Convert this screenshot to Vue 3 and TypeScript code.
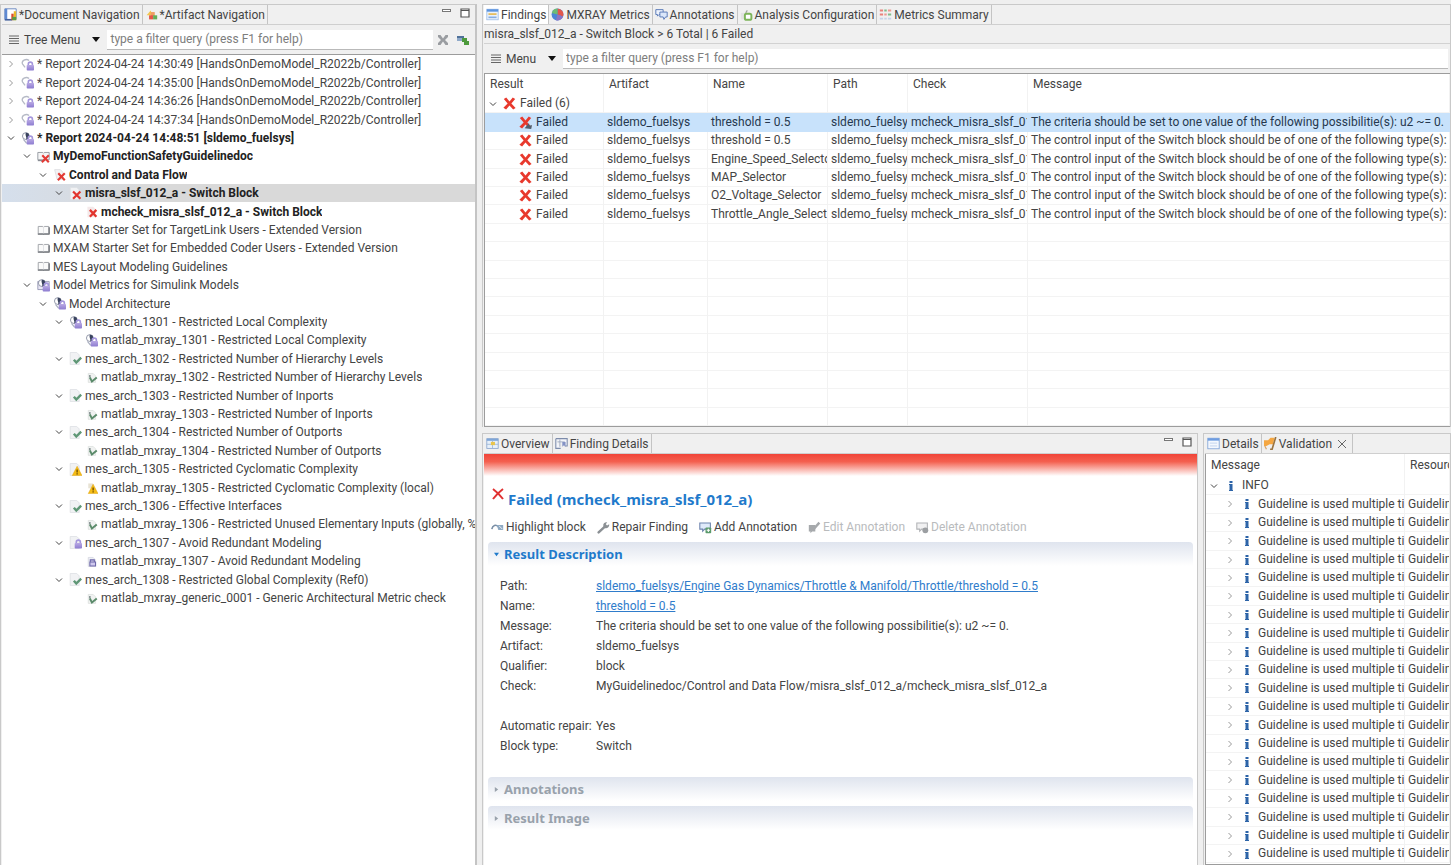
<script setup lang="ts">
interface TreeNode { level: number; icon: string; label: string; open?: boolean; leaf?: boolean; bold?: boolean; selected?: boolean }
interface Tab { icon: string; label: string; active?: boolean; closable?: boolean }

const reportTimes = ['14:30:49', '14:35:00', '14:36:26', '14:37:34']
const rule = (label: string, icon: string): TreeNode => ({ level: 3, icon, label, open: true })
const check = (label: string, icon: string): TreeNode => ({ level: 4, icon, label, leaf: true })

const tree: TreeNode[] = [
  ...reportTimes.map((t) => ({ level: 0, icon: 'report', label: `* Report 2024-04-24 ${t} [HandsOnDemoModel_R2022b/Controller]` })),
  { level: 0, icon: 'review', label: '* Report 2024-04-24 14:48:51 [sldemo_fuelsys]', open: true, bold: true },
  { level: 1, icon: 'doc-fail', label: 'MyDemoFunctionSafetyGuidelinedoc', open: true, bold: true },
  { level: 2, icon: 'chapter-fail', label: 'Control and Data Flow', open: true, bold: true },
  { level: 3, icon: 'rule-fail', label: 'misra_slsf_012_a - Switch Block', open: true, bold: true, selected: true },
  { level: 4, icon: 'check-fail', label: 'mcheck_misra_slsf_012_a - Switch Block', leaf: true, bold: true },
  { level: 1, icon: 'book', label: 'MXAM Starter Set for TargetLink Users - Extended Version', leaf: true },
  { level: 1, icon: 'book', label: 'MXAM Starter Set for Embedded Coder Users - Extended Version', leaf: true },
  { level: 1, icon: 'book', label: 'MES Layout Modeling Guidelines', leaf: true },
  { level: 1, icon: 'doc-review', label: 'Model Metrics for Simulink Models', open: true },
  { level: 2, icon: 'review', label: 'Model Architecture', open: true },
  rule('mes_arch_1301 - Restricted Local Complexity', 'review'),
  check('matlab_mxray_1301 - Restricted Local Complexity', 'review'),
  rule('mes_arch_1302 - Restricted Number of Hierarchy Levels', 'rule-ok'),
  check('matlab_mxray_1302 - Restricted Number of Hierarchy Levels', 'check-ok'),
  rule('mes_arch_1303 - Restricted Number of Inports', 'rule-ok'),
  check('matlab_mxray_1303 - Restricted Number of Inports', 'check-ok'),
  rule('mes_arch_1304 - Restricted Number of Outports', 'rule-ok'),
  check('matlab_mxray_1304 - Restricted Number of Outports', 'check-ok'),
  rule('mes_arch_1305 - Restricted Cyclomatic Complexity', 'rule-warn'),
  check('matlab_mxray_1305 - Restricted Cyclomatic Complexity (local)', 'check-warn'),
  rule('mes_arch_1306 - Effective Interfaces', 'rule-ok'),
  check('matlab_mxray_1306 - Restricted Unused Elementary Inputs (globally, %', 'check-ok'),
  rule('mes_arch_1307 - Avoid Redundant Modeling', 'rule-lock'),
  check('matlab_mxray_1307 - Avoid Redundant Modeling', 'check-lock'),
  rule('mes_arch_1308 - Restricted Global Complexity (Ref0)', 'rule-ok'),
  check('matlab_mxray_generic_0001 - Generic Architectural Metric check', 'check-ok'),
]

const navTabs: Tab[] = [
  { icon: 'docnav', label: '*Document Navigation', active: true },
  { icon: 'artnav', label: '*Artifact Navigation' },
]
const findingTabs: Tab[] = [
  { icon: 'findings', label: 'Findings', active: true },
  { icon: 'pie', label: 'MXRAY Metrics' },
  { icon: 'bubbles', label: 'Annotations' },
  { icon: 'config', label: 'Analysis Configuration' },
  { icon: 'summary', label: 'Metrics Summary' },
]
const overviewTabs: Tab[] = [
  { icon: 'overview', label: 'Overview', active: true },
  { icon: 'detail', label: 'Finding Details' },
]
const validationTabs: Tab[] = [
  { icon: 'form', label: 'Details' },
  { icon: 'flag', label: 'Validation', active: true, closable: true },
]

const columns = ['Result', 'Artifact', 'Name', 'Path', 'Check', 'Message']
const switchMessage = 'The control input of the Switch block should be of one of the following type(s):'
const findings = [
  { name: 'threshold = 0.5', message: 'The criteria should be set to one value of the following possibilitie(s): u2 ~= 0.' },
  { name: 'threshold = 0.5', message: switchMessage },
  { name: 'Engine_Speed_Selector', message: switchMessage },
  { name: 'MAP_Selector', message: switchMessage },
  { name: 'O2_Voltage_Selector', message: switchMessage },
  { name: 'Throttle_Angle_Select', message: switchMessage },
]
const emptyRows = 11

const actions = [
  { icon: 'highlight', label: 'Highlight block', disabled: false },
  { icon: 'wrench', label: 'Repair Finding', disabled: false },
  { icon: 'note-add', label: 'Add Annotation', disabled: false },
  { icon: 'note-edit', label: 'Edit Annotation', disabled: true },
  { icon: 'note-delete', label: 'Delete Annotation', disabled: true },
]
const details = [
  { label: 'Path:', value: 'sldemo_fuelsys/Engine Gas Dynamics/Throttle & Manifold/Throttle/threshold = 0.5', link: true },
  { label: 'Name:', value: 'threshold = 0.5', link: true },
  { label: 'Message:', value: 'The criteria should be set to one value of the following possibilitie(s): u2 ~= 0.' },
  { label: 'Artifact:', value: 'sldemo_fuelsys' },
  { label: 'Qualifier:', value: 'block' },
  { label: 'Check:', value: 'MyGuidelinedoc/Control and Data Flow/misra_slsf_012_a/mcheck_misra_slsf_012_a' },
]
const extras = [
  { label: 'Automatic repair:', value: 'Yes' },
  { label: 'Block type:', value: 'Switch' },
]
const infoCount = 20
</script>

<template>
  <svg class="sprite" aria-hidden="true">
    <defs>
      <linearGradient id="lockFill" x1="0" y1="0" x2="0" y2="1"><stop offset="0" stop-color="#b9a9e4" /><stop offset="1" stop-color="#8c7bd0" /></linearGradient>
      <symbol id="lock" viewBox="0 0 16 16"><path d="M9 9V7.5a2.5 2.5 0 0 1 5 0V9" fill="none" stroke="#a496dc" stroke-width="2" /><rect x="7" y="8.5" width="9" height="7" rx="1" fill="url(#lockFill)" /></symbol>
      <symbol id="lens" viewBox="0 0 16 16"><circle cx="6" cy="5" r="4.2" fill="#fff" stroke="#7c8398" stroke-width="1" /><path d="M6 .8a4.2 4.2 0 0 1 0 8.4C8 7 4.500 4 6 .8z" fill="#39435e" /></symbol>
      <symbol id="bigx" viewBox="0 0 16 16"><path d="M1 2.500 4 .5l4 5L12 .5l3 2L10.300 8l5.200 5.500-3 2L8 10.500 3.800 15.500.5 13.300 5.700 8z" fill="#e8392d" /></symbol>
      <symbol id="page" viewBox="0 0 16 16"><path d="M1.500.5h8l3 3v12h-11z" fill="#f1f2f4" stroke="#dcdfe3" /></symbol>
      <symbol id="check" viewBox="0 0 16 16"><path d="M6 9.500 9 13l6-6" fill="none" stroke="#5f9776" stroke-width="3" /></symbol>
      <symbol id="warn" viewBox="0 0 16 16"><path d="M10 4 16 15.500H4z" fill="#f5bd16" stroke="#e0a20c" stroke-width=".6" /><path d="M9.200 8h1.600v3.600H9.200zM9.200 12.500h1.600V14H9.200z" fill="#6b4a00" /></symbol>
      <symbol id="smallx" viewBox="0 0 16 16"><path d="M6.500 6.500 14.500 15M14.500 6.500 6 15" stroke="#e33a35" stroke-width="2.600" /></symbol>

      <symbol id="i-book" viewBox="0 0 16 16"><path d="M1.500 3h5.500l1 1 1-1h5.500v9H9l-1 1-1-1H1.500z" fill="#fafafa" stroke="#a3a6ab" stroke-width="1.200" /><path d="M8 4v8" stroke="#dcdee1" /><path d="M1 12.500h14M15 4v9" stroke="#6f7378" stroke-width="1.600" /></symbol>
      <symbol id="i-report" viewBox="0 0 16 16"><path d="M2 7.500a5 4 0 0 1 8-4.500M2 7.500l3 4" fill="none" stroke="#b6bac6" stroke-width="1.600" /><use href="#lock" /></symbol>
      <symbol id="i-review" viewBox="0 0 16 16"><use href="#lens" /><path d="M3 9l4 5" stroke="#a9afc0" stroke-width="1.500" /><use href="#lock" /></symbol>
      <symbol id="i-doc-fail" viewBox="0 0 16 16"><path d="M1 3h6l1 1 1-1h6v9H1z" fill="#f5f5f6" stroke="#888c94" /><path d="M1 13h9" stroke="#888c94" stroke-width="1.500" /><use href="#smallx" /></symbol>
      <symbol id="i-chapter-fail" viewBox="0 0 16 16"><path d="M2 2h7l3 3v9H5z" fill="#f3f2f4" stroke="#dcdce0" /><use href="#smallx" /></symbol>
      <symbol id="i-rule-fail" viewBox="0 0 16 16"><use href="#page" /><path d="M5 5.500 14 14.500M14 5.500 5 14.500" stroke="#e2352e" stroke-width="2.800" /></symbol>
      <symbol id="i-check-fail" viewBox="0 0 16 16"><path d="M3 2h7l3 3v10H3z" fill="#f4e9ea" /><path d="M6 6 14 14.500M14 6 6 14.500" stroke="#e2352e" stroke-width="2.800" /></symbol>
      <symbol id="i-doc-review" viewBox="0 0 16 16"><path d="M1 3h14v10H1z" fill="#e9e7f5" stroke="#8c8fae" /><use href="#lens" /><use href="#lock" /></symbol>
      <symbol id="i-rule-ok" viewBox="0 0 16 16"><use href="#page" /><use href="#check" /></symbol>
      <symbol id="i-check-ok" viewBox="0 0 16 16"><path d="M4 3h6l3 3v8H4z" fill="#f0f2f1" stroke="#dde0de" /><path d="M6 5v3" stroke="#707d80" stroke-width="1.600" /><path d="M6 8l2.500 5 6-5" fill="none" stroke="#5b8b6b" stroke-width="2.400" /></symbol>
      <symbol id="i-rule-warn" viewBox="0 0 16 16"><use href="#page" /><use href="#warn" /></symbol>
      <symbol id="i-check-warn" viewBox="0 0 16 16"><path d="M4 3h6v6H4z" fill="#e8e3d4" /><use href="#warn" /></symbol>
      <symbol id="i-rule-lock" viewBox="0 0 16 16"><use href="#page" /><use href="#lock" /></symbol>
      <symbol id="i-check-lock" viewBox="0 0 16 16"><path d="M4 3h6l3 3v8H4z" fill="#eef0f5" stroke="#d5d8e2" /><path d="M6.500 8V6h5v2M6 8.500h7v5H6z" fill="#cfc8ee" stroke="#6c66a8" stroke-width="1.300" /></symbol>

      <symbol id="i-docnav" viewBox="0 0 16 16"><path d="M1 1h14v13H1z" fill="#fff" stroke="#5578b8" /><path d="M1 1h3v13H1z" fill="#5f8ad2" /><path d="M1 14.500h9" stroke="#44619c" stroke-width="2" /><path d="M9 7h3v8H9z" fill="#d84a33" /><path d="M12 4h3v11h-3z" fill="#e9b829" /><path d="M10 11h5v4h-5z" fill="#5b9c45" /></symbol>
      <symbol id="i-artnav" viewBox="0 0 16 16"><path d="M2 9l5-6 2 6z" fill="#f3c64e" /><rect x="7" y="5" width="5" height="5" fill="#ef9c62" /><rect x="5" y="9" width="5" height="5" fill="#e3574a" /><rect x="10" y="9" width="5" height="5" fill="#63ae58" /></symbol>
      <symbol id="i-findings" viewBox="0 0 16 16"><rect x="1" y="1.500" width="14" height="13" fill="#e9f1fc" stroke="#9dbde8" /><path d="M1 3h14" stroke="#5b94df" stroke-width="3" /><path d="M3 7.500h10" stroke="#e6b94e" stroke-width="2" /><path d="M3 11.500h10" stroke="#86ade2" stroke-width="2" /></symbol>
      <symbol id="i-pie" viewBox="0 0 16 16"><circle cx="8" cy="8" r="7.300" fill="#4b86d6" /><path d="M8 8V.7A7.300 7.300 0 0 1 14.800 10.500z" fill="#e2574c" /><path d="M8 8 14.800 10.500A7.300 7.300 0 0 1 6 15z" fill="#8a74c4" /><path d="M8 8 1 6A7.300 7.300 0 0 1 8 .7z" fill="#6cbc74" /></symbol>
      <symbol id="i-bubbles" viewBox="0 0 16 16"><path d="M1 2h9v6H5L3 10V8H1z" fill="#eef3fc" stroke="#5d7cb8" stroke-width="1.200" /><path d="M6 5h9v6h-2l-2 3-1-3H6z" fill="#dbe7fa" stroke="#5d7cb8" stroke-width="1.200" /></symbol>
      <symbol id="i-config" viewBox="0 0 16 16"><path d="M1 6h6v8H1z" fill="#e2e3e2" /><path d="M7 6l2-3" stroke="#a2a6a0" stroke-width="1.500" /><rect x="6" y="7" width="8" height="7.500" rx="2" fill="#fff" stroke="#7db45a" stroke-width="2.400" /></symbol>
      <symbol id="i-summary" viewBox="0 0 16 16"><path d="M1 3h4M1 8h4" stroke="#e8837c" stroke-width="2.600" /><path d="M6.500 3h3M11 8h4" stroke="#7fbd8c" stroke-width="2.600" /><path d="M11 3h4M6.500 8h3" stroke="#ee9a92" stroke-width="2.600" /><path d="M1 13h4M6.500 13h3M11 13h4" stroke="#c6d3e8" stroke-width="2" /></symbol>
      <symbol id="i-overview" viewBox="0 0 16 16"><rect x="1" y="2" width="14" height="12" fill="#e7f0fa" stroke="#86a3cc" /><path d="M1 3.500h14" stroke="#7fa6d8" stroke-width="2.400" /><path d="M8 4v10M1 9h14" stroke="#9bb4d4" /><rect x="6" y="6" width="5" height="4" fill="#e9c44b" /></symbol>
      <symbol id="i-detail" viewBox="0 0 16 16"><path d="M1 2h14v9h-3M1 2v12h6" fill="#f3f5fa" stroke="#7d8cab" stroke-width="1.300" /><path d="M6 3v9M3 6h9" stroke="#96a3bd" /><path d="M9 6h4v6l-2-2-2 2z" fill="#8392c4" /></symbol>
      <symbol id="i-form" viewBox="0 0 16 16"><rect x="1" y="1.500" width="14" height="13" fill="#f4f8fe" stroke="#7b9fd6" /><path d="M1 3h14" stroke="#6f9de0" stroke-width="3" /><path d="M3.500 7.500h9M3.500 11h9" stroke="#c3d4ee" stroke-width="1.200" /></symbol>
      <symbol id="i-flag" viewBox="0 0 16 16"><path d="M0 4h5l3-3h5l-2 8H7l-4 2H0z" fill="#f5a742" /><path d="M14.500 0 10 15H7.500" stroke="#9a7440" stroke-width="2" fill="none" /><path d="M1 11l2 4" stroke="#d9a469" stroke-width="1.500" /></symbol>

      <symbol id="i-highlight" viewBox="0 0 16 16"><path d="M1 10c1-5 5-6 8-3" fill="none" stroke="#7a8fa6" stroke-width="2" /><path d="M7 5h8v6H9z" fill="#8ea9c2" /><path d="M10 6l4 4" stroke="#fff" /></symbol>
      <symbol id="i-wrench" viewBox="0 0 16 16"><path d="M2 14 9 7.500" stroke="#8b9094" stroke-width="3" stroke-linecap="round" /><path d="M8 7a4 4 0 0 1 4.500-5.500L10.800 4l1.600 1.600L15 4A4 4 0 0 1 9.500 8.500z" fill="#8b9094" /></symbol>
      <symbol id="i-note-add" viewBox="0 0 16 16"><path d="M1 2.500h13v7.500H7l-2.500 2.500V10H1z" fill="#dfeafa" stroke="#6d83ad" stroke-width="1.300" /><rect x="8" y="8" width="7" height="7" rx="1" fill="#5b9a6c" /><path d="M11.500 9.500v4M9.500 11.500h4" stroke="#fff" stroke-width="1.300" /></symbol>
      <symbol id="i-note-edit" viewBox="0 0 16 16"><path d="M1 5h8v8H5l-2 2v-2H1z" fill="#a6a9ac" /><path d="M6 11 14 2" stroke="#a6a9ac" stroke-width="3" /></symbol>
      <symbol id="i-note-delete" viewBox="0 0 16 16"><path d="M1 2.500h13v7.500H7l-2.500 2.500V10H1z" fill="#f1f1f2" stroke="#b0b2b5" stroke-width="1.300" /><circle cx="11.500" cy="11.500" r="3.600" fill="#9c9fa2" /></symbol>
    </defs>
  </svg>

  <main class="workbench">
    <section class="part nav" aria-label="Navigation">
      <div class="tabs" role="tablist">
        <button v-for="t in navTabs" :key="t.label" class="tab" role="tab" :aria-selected="!!t.active"><svg class="icon"><use :href="'#i-' + t.icon" /></svg>{{ t.label }}</button>
        <span class="window-buttons">
          <button aria-label="Minimize"><svg viewBox="0 0 10 10"><rect x=".5" y="1.500" width="8" height="2" fill="#fff" stroke="#777" /></svg></button>
          <button aria-label="Maximize"><svg viewBox="0 0 10 10"><path d="M1 1h8v8H1zM1 2.500h8" fill="#fff" stroke="#555" stroke-width="1.200" /></svg></button>
        </span>
      </div>
      <div class="toolbar">
        <button class="menu"><svg class="burger" viewBox="0 0 10 10"><path d="M0 1h10M0 3.500h10M0 6h10M0 8.500h10" stroke="#666" stroke-width="1.200" /></svg>Tree Menu<svg class="caret" viewBox="0 0 8 5"><path d="M0 0h8L4 5z" fill="#111" /></svg></button>
        <input class="filter" type="text" aria-label="Tree filter" placeholder="type a filter query (press F1 for help)" />
        <button class="tool" aria-label="Clear filter"><svg viewBox="0 0 12 12"><path d="M1 1h2.500L6 4.500 8.500 1H11v2L8 6l3 3v2H8.500L6 7.500 3.500 11H1V9l3-3-3-3z" fill="#9a9da1" /></svg></button>
        <button class="tool" aria-label="Link with selection"><svg viewBox="0 0 12 12"><path d="M0 2h7v5H0z" fill="#8fa9c9" /><path d="M0 2h7v2H0z" fill="#4f7199" /><path d="M5 4h5v3h2v4H7V8H5z" fill="#4d9a3c" /></svg></button>
      </div>
      <ul class="tree" role="tree">
        <li v-for="(n, i) in tree" :key="i" role="treeitem" :aria-selected="!!n.selected" :class="['level-' + n.level, { bold: n.bold, selected: n.selected }]">
          <span v-if="n.leaf" class="twisty"></span>
          <button v-else class="twisty" :aria-label="n.open ? 'Collapse' : 'Expand'"><svg viewBox="0 0 8 8" :class="{ open: n.open }"><path d="M2.500 1 5.500 4 2.500 7" /></svg></button>
          <svg class="icon"><use :href="'#i-' + n.icon" /></svg>
          <span class="label">{{ n.label }}</span>
        </li>
      </ul>
    </section>

    <div class="side">
      <section class="part findings" aria-label="Findings">
        <div class="tabs" role="tablist">
          <button v-for="t in findingTabs" :key="t.label" class="tab" :class="{ lit: t.active }" role="tab" :aria-selected="!!t.active"><svg class="icon"><use :href="'#i-' + t.icon" /></svg>{{ t.label }}</button>
        </div>
        <div class="crumb">misra_slsf_012_a - Switch Block &gt; 6 Total | 6 Failed</div>
        <div class="toolbar">
          <button class="menu"><svg class="burger" viewBox="0 0 10 10"><path d="M0 1h10M0 3.500h10M0 6h10M0 8.500h10" stroke="#666" stroke-width="1.200" /></svg>Menu<svg class="caret" viewBox="0 0 8 5"><path d="M0 0h8L4 5z" fill="#111" /></svg></button>
          <input class="filter" type="text" aria-label="Findings filter" placeholder="type a filter query (press F1 for help)" />
        </div>
        <div class="table-box">
          <table class="grid">
            <colgroup><col class="c-result" /><col class="c-artifact" /><col class="c-name" /><col class="c-path" /><col class="c-check" /><col /></colgroup>
            <thead><tr><th v-for="c in columns" :key="c" scope="col">{{ c }}</th></tr></thead>
            <tbody>
              <tr>
                <td><span class="cell"><button class="twisty" aria-label="Collapse"><svg viewBox="0 0 8 8" class="open"><path d="M2.500 1 5.500 4 2.500 7" /></svg></button><svg class="mark"><use href="#bigx" /></svg>Failed (6)</span></td>
                <td v-for="k in 5" :key="k"></td>
              </tr>
              <tr v-for="(f, i) in findings" :key="i" :class="{ selected: i === 0 }">
                <td><span class="cell child"><svg class="mark" viewBox="0 0 16 16"><use href="#bigx" /><path v-if="i === 0" d="M7 15l5-6 1 3 3-1-1 5z" fill="#51606e" /></svg>Failed</span></td>
                <td>sldemo_fuelsys</td>
                <td>{{ f.name }}</td>
                <td>sldemo_fuelsy</td>
                <td>mcheck_misra_slsf_012</td>
                <td>{{ f.message }}</td>
              </tr>
              <tr v-for="r in emptyRows" :key="'e' + r"><td v-for="k in 6" :key="k"></td></tr>
            </tbody>
          </table>
        </div>
      </section>

      <div class="bottom">
        <section class="part overview" aria-label="Overview">
          <div class="tabs" role="tablist">
            <button v-for="t in overviewTabs" :key="t.label" class="tab" role="tab" :aria-selected="!!t.active"><svg class="icon"><use :href="'#i-' + t.icon" /></svg>{{ t.label }}</button>
            <span class="window-buttons">
              <button aria-label="Minimize"><svg viewBox="0 0 10 10"><rect x=".5" y="1.500" width="8" height="2" fill="#fff" stroke="#777" /></svg></button>
              <button aria-label="Maximize"><svg viewBox="0 0 10 10"><path d="M1 1h8v8H1zM1 2.500h8" fill="#fff" stroke="#555" stroke-width="1.200" /></svg></button>
            </span>
          </div>
          <div class="form">
            <div class="banner"></div>
            <h1><svg class="title-x" viewBox="0 0 12 12"><path d="M1 1c4 3 7 6 10 10M11 1C7 4 4 7 1 11" stroke="#e03131" stroke-width="2" fill="none" /></svg>Failed (mcheck_misra_slsf_012_a)</h1>
            <div class="actions">
              <button v-for="a in actions" :key="a.label" :disabled="a.disabled"><svg class="icon"><use :href="'#i-' + a.icon" /></svg>{{ a.label }}</button>
            </div>
            <h2 class="expanded"><button><svg class="fold" viewBox="0 0 6 6"><path d="M0 1h6L3 5z" /></svg>Result Description</button></h2>
            <dl>
              <template v-for="d in details" :key="d.label">
                <dt>{{ d.label }}</dt>
                <dd><a v-if="d.link" href="#">{{ d.value }}</a><template v-else>{{ d.value }}</template></dd>
              </template>
            </dl>
            <dl class="extras">
              <template v-for="d in extras" :key="d.label"><dt>{{ d.label }}</dt><dd>{{ d.value }}</dd></template>
            </dl>
            <h2><button><svg class="fold" viewBox="0 0 6 6"><path d="M1 0v6l4-3z" /></svg>Annotations</button></h2>
            <h2><button><svg class="fold" viewBox="0 0 6 6"><path d="M1 0v6l4-3z" /></svg>Result Image</button></h2>
          </div>
        </section>

        <section class="part validation" aria-label="Validation">
          <div class="tabs" role="tablist">
            <button v-for="t in validationTabs" :key="t.label" class="tab" role="tab" :aria-selected="!!t.active"><svg class="icon"><use :href="'#i-' + t.icon" /></svg>{{ t.label }}<svg v-if="t.closable" class="close" viewBox="0 0 8 8"><path d="M0 0l8 8M8 0L0 8" stroke="#666" /></svg></button>
          </div>
          <div class="table-box">
            <table class="grid">
              <colgroup><col class="c-info" /><col /></colgroup>
              <thead><tr><th scope="col">Message</th><th scope="col">Resource</th></tr></thead>
              <tbody>
                <tr><td><span class="cell"><button class="twisty" aria-label="Collapse"><svg viewBox="0 0 8 8" class="open"><path d="M2.500 1 5.500 4 2.500 7" /></svg></button><svg class="info" viewBox="0 0 12 12"><path d="M4.500 1h3v2h-3zM4 4h3.500v6H8v1H4v-1h.5V5H4z" fill="#2d64a8" /></svg>INFO</span></td><td></td></tr>
                <tr v-for="r in infoCount" :key="r">
                  <td><span class="cell sub"><button class="twisty" aria-label="Expand"><svg viewBox="0 0 8 8"><path d="M2.500 1 5.500 4 2.500 7" /></svg></button><svg class="info" viewBox="0 0 12 12"><path d="M4.500 1h3v2h-3zM4 4h3.500v6H8v1H4v-1h.5V5H4z" fill="#2d64a8" /></svg>Guideline is used multiple ti</span></td>
                  <td>Guideline</td>
                </tr>
              </tbody>
            </table>
          </div>
        </section>
      </div>
    </div>
  </main>
</template>

<style>
body { margin: 0; background: #f0f0f0; }
</style>

<style scoped>
* { box-sizing: border-box; }
.sprite { position: absolute; width: 0; height: 0; }
button { font: inherit; color: inherit; background: none; border: 0; padding: 0; }
.workbench { height: 100vh; overflow: hidden; display: grid; grid-template-columns: 477fr 974fr; padding-top: 4px; font: 12px/18px Roboto, "Open Sans", sans-serif; color: #444; background: #efefef; }
.part { display: flex; flex-direction: column; min-width: 0; min-height: 0; overflow: hidden; border: 1px solid #c9c9c9; border-bottom: 0; background: #f0f0f0; }
.nav { padding-left: 1px; border-right: 2px solid #c4c4c4; }
.side { display: grid; grid-template-rows: 423px 1fr; row-gap: 6px; min-width: 0; padding-left: 5px; }
.side .part { padding-left: 1px; }
.bottom { display: grid; grid-template-columns: 716fr 248fr; column-gap: 5px; min-height: 0; min-width: 0; }

.tabs { display: flex; flex: none; height: 20px; border-bottom: 1px solid #cfcfcf; }
.tab { display: flex; align-items: center; gap: 2px; padding: 0 2px; border-right: 1px solid #c4c4c4; white-space: nowrap; }
.tab.lit { background: #fff; }
.icon { width: 13px; height: 13px; flex: none; }
.close { width: 8px; height: 8px; margin: 0 4px; }
.window-buttons { display: flex; gap: 8px; margin-left: auto; padding: 3px 5px 0 0; }
.window-buttons button { height: 10px; line-height: 0; }
.window-buttons svg { width: 10px; height: 10px; }

.toolbar { display: flex; flex: none; align-items: center; height: 29px; padding-right: 2px; }
.menu { display: flex; align-items: center; flex: none; padding: 0 7px; }
.burger { width: 10px; height: 10px; margin-right: 5px; }
.caret { width: 8px; height: 5px; margin-left: 12px; }
.filter { flex: 1; min-width: 0; height: 20px; padding: 0 3px; border: 0; border-bottom: 1px solid #b9b9b9; background: #fff; font: inherit; color: #333; }
.filter::placeholder { color: #7d7d7d; opacity: 1; }
.tool { width: 20px; height: 14px; line-height: 0; }
.tool svg { width: 12px; height: 12px; }

.tree { flex: 1; min-height: 0; overflow: hidden; margin: 0; padding: 0; list-style: none; background: #fff; border-top: 1px solid #9c9c9c; }
.tree li { display: flex; align-items: center; height: 18px; white-space: nowrap; }
.tree li:nth-child(5n + 2), .tree li:nth-child(5n + 4) { height: 19px; }
.tree .icon { margin: 0 3px 0 4px; }
.tree .label { overflow: hidden; }
.level-0 { padding-left: 3px; }
.level-1 { padding-left: 19px; }
.level-2 { padding-left: 35px; }
.level-3 { padding-left: 51px; }
.level-4 { padding-left: 67px; }
.tree .bold { font-weight: 700; color: #222; }
.tree .selected { background: linear-gradient(90deg, #d5dfec, #d9d9d9 30%); }
.twisty { display: inline-flex; align-items: center; justify-content: center; flex: none; width: 12px; height: 12px; }
.twisty svg { width: 8px; height: 8px; fill: none; stroke: #999; stroke-width: 1; }
.twisty svg.open { transform: rotate(90deg); stroke: #444; }

.crumb { flex: none; height: 19px; line-height: 18px; border-bottom: 1px solid #d2d2d2; white-space: nowrap; }
.table-box { flex: 1; min-height: 0; overflow: hidden; border: 1px solid #9c9c9c; border-right: 0; background: #fff; }
.validation .table-box { border-top: 0; }
.grid { width: 100%; table-layout: fixed; border-collapse: separate; border-spacing: 0; }
.grid th { height: 21px; line-height: 21px; padding: 0 5px; text-align: left; font-weight: 400; border-right: 1px solid #f2f2f2; overflow: hidden; white-space: nowrap; }
.validation .grid th { height: 23px; line-height: 23px; }
.grid td { height: 18px; padding: 0 3px; line-height: 17px; overflow: hidden; white-space: nowrap; border-right: 1px solid #f2f2f2; border-bottom: 1px solid #f3f3f3; }
.grid tr:nth-child(5n + 2) td, .grid tr:nth-child(5n + 4) td { height: 19px; }
.grid td:first-child { padding: 0; }
.grid .selected td { background: #c8e2fb; border-color: #c8e2fb; color: #26384e; }
.c-result { width: 119px; }
.c-artifact { width: 104px; }
.c-name { width: 120px; }
.c-path { width: 80px; }
.c-check { width: 120px; }
.c-info { width: 199px; }
.cell { display: flex; align-items: center; padding-left: 2px; }
.child { padding-left: 30px; }
.sub { padding-left: 18px; }
.mark { width: 13px; height: 13px; margin: 0 4px; flex: none; }
.info { width: 12px; height: 12px; margin: 0 5px; flex: none; }

.form { flex: 1; min-height: 0; overflow: hidden; background: #fff; }
.banner { height: 22px; background: linear-gradient(#f04438, #f4604f 35%, #fff); }
h1 { display: flex; align-items: center; gap: 4px; margin: 0; padding: 12px 8px 0; font: 700 15px/22px "Open Sans", sans-serif; color: #1f7acb; }
.title-x { width: 12px; height: 12px; margin-bottom: 10px; }
.actions { display: flex; gap: 11px; height: 20px; margin: 7px 0 5px 7px; }
.actions button { display: flex; align-items: center; gap: 2px; white-space: nowrap; }
.actions button:disabled { color: #b9bbbd; }
h2 { height: 24px; margin: 0 4px 5px; font: 700 13px/24px "Noto Sans", sans-serif; color: #98a1ab; border-radius: 4px 4px 0 0; background: linear-gradient(#dfe4ee, #fff); }
h2 button { display: flex; align-items: center; padding-left: 6px; }
h2.expanded { color: #1f7acb; }
.fold { width: 5px; height: 5px; margin-right: 5px; fill: currentColor; }
dl { display: grid; grid-template-columns: 96px 1fr; grid-auto-rows: 20px; line-height: 20px; margin: 10px 0 0 16px; white-space: nowrap; }
dl.extras { margin: 20px 0 21px 16px; }
dt, dd { margin: 0; }
a { color: #2f7ccb; text-decoration: underline; }
</style>
